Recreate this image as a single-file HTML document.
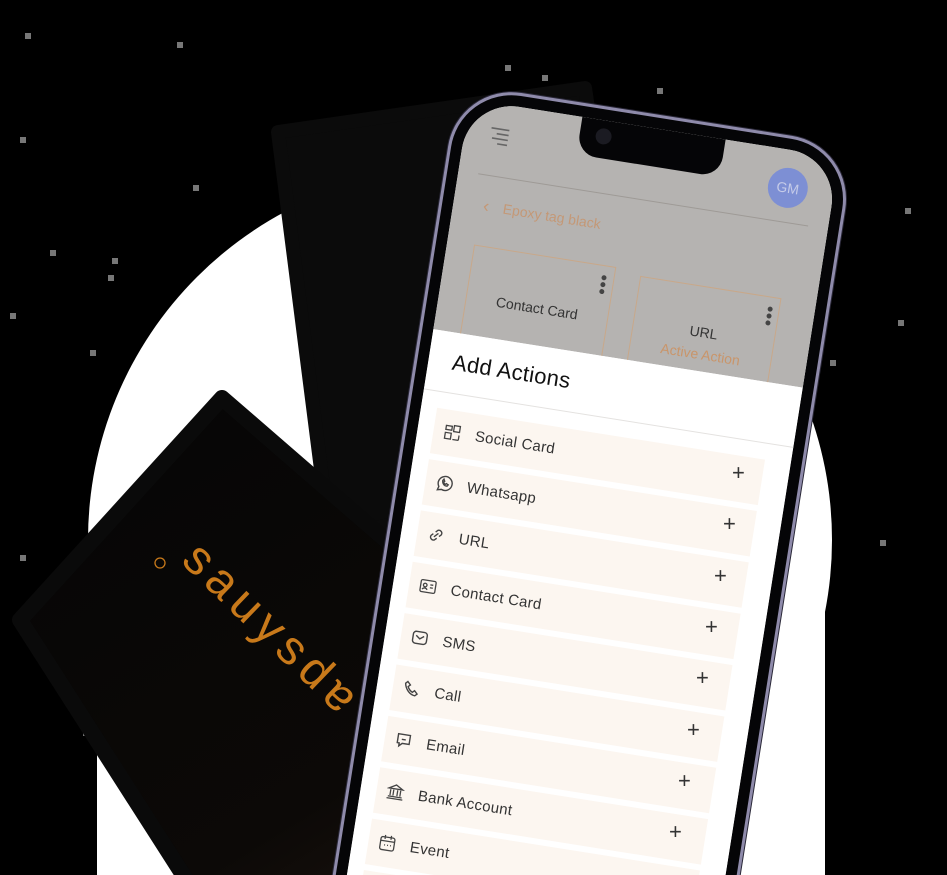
<!DOCTYPE html>
<html><head><meta charset="utf-8"><style>
*{margin:0;padding:0;box-sizing:border-box}
html{width:947px;height:875px;overflow:hidden;background:#000}
body{width:947px;height:875px;background:#000;overflow:hidden;position:relative;font-family:"Liberation Sans",sans-serif}
#wrap{position:absolute;left:0;top:0;width:947px;height:875px;overflow:hidden}
.abs{position:absolute}
.dot{position:absolute;width:6px;height:6px;background:#777}
.phone{position:absolute;left:475px;top:437px;width:0;height:0;transform:rotate(9deg);transform-origin:0 0}
.frame{position:absolute;left:-72px;top:-347px;width:402px;height:1000px;border-radius:64px;background:#050507;border:3px solid #8f8bab;box-shadow:0 0 0 1px #2a2838}
.screen{position:absolute;left:-58px;top:-333px;width:374px;height:980px;border-radius:50px;background:#fff;overflow:hidden}
.gray{position:absolute;left:0;top:0;width:100%;height:233px;background:#b5b3b1}
.row{position:absolute;left:16px;width:332px;height:46px;background:#fcf6f0}
.row span{position:absolute;left:42px;top:14px;font-size:15px;color:#333;letter-spacing:.3px}
.row svg{position:absolute;left:10px;top:13px}
.plus{position:absolute;font-size:22px;color:#333;font-weight:300;line-height:1}
</style></head><body><div id="wrap">
<div class="abs" style="left:88px;top:168px;width:744px;height:744px;border-radius:50%;background:#fff"></div>
<div class="abs" style="left:97px;top:540px;width:728px;height:335px;background:#fff"></div>
<div class="dot" style="left:25px;top:33px"></div><div class="dot" style="left:177px;top:42px"></div>
<div class="dot" style="left:505px;top:65px"></div><div class="dot" style="left:542px;top:75px"></div>
<div class="dot" style="left:657px;top:88px"></div><div class="dot" style="left:20px;top:137px"></div>
<div class="dot" style="left:193px;top:185px"></div><div class="dot" style="left:905px;top:208px"></div>
<div class="dot" style="left:50px;top:250px"></div><div class="dot" style="left:112px;top:258px"></div>
<div class="dot" style="left:108px;top:275px"></div><div class="dot" style="left:10px;top:313px"></div>
<div class="dot" style="left:898px;top:320px"></div><div class="dot" style="left:830px;top:360px"></div>
<div class="dot" style="left:90px;top:350px"></div><div class="dot" style="left:20px;top:555px"></div>
<div class="dot" style="left:83px;top:730px"></div><div class="dot" style="left:880px;top:540px"></div>
<svg class="abs" style="left:0;top:0" width="947" height="875">
<polygon points="278,132 585,88 640,460 330,540" fill="#0b0b0b" stroke="#0b0b0b" stroke-width="14" stroke-linejoin="round"/>
<defs><linearGradient id="g" x1="0" y1="0" x2="0.6" y2="1"><stop offset="0" stop-color="#050505"/><stop offset="0.6" stop-color="#0c0907"/><stop offset="1" stop-color="#2a1e15"/></linearGradient></defs>
<polygon points="20,620 222,398 720,830 340,1120" fill="url(#g)" stroke="#0a0a0a" stroke-width="16" stroke-linejoin="round"/>
<text x="0" y="0" transform="translate(180,562) rotate(44)" font-family="Liberation Sans" font-size="48" font-weight="300" fill="#c8791a" letter-spacing="7">sauysdɐ</text>
<circle cx="160" cy="563" r="5" fill="none" stroke="#c8791a" stroke-width="1.3"/>
</svg>
<div class="phone">
<div class="frame"></div>
<div class="screen">
 <div class="gray"></div>
 <div class="abs" style="left:114px;top:-10px;width:145px;height:48px;background:#050507;border-radius:0 0 20px 20px"></div>
 <div class="abs" style="left:130px;top:8px;width:16px;height:16px;border-radius:50%;background:#1b1b22"></div>
 <svg class="abs" style="left:24px;top:22px" width="22" height="20"><g stroke="#666" stroke-width="1.6"><line x1="2" y1="3" x2="20" y2="3"/><line x1="8" y1="8" x2="20" y2="8"/><line x1="4" y1="13" x2="20" y2="13"/><line x1="10" y1="18" x2="20" y2="18"/></g></svg>
 <div class="abs" style="left:20px;top:72px;width:334px;height:1px;background:#9e9a96"></div>
 <div class="abs" style="left:308px;top:18px;width:40px;height:40px;border-radius:50%;background:#7d8fd4;color:#c5cbe8;font-size:14px;text-align:center;line-height:40px">GM</div>
 <div class="abs" style="left:30px;top:93px;font-size:18px;color:#c49876">‹</div>
 <div class="abs" style="left:50px;top:95px;font-size:14px;color:#c49876">Epoxy tag black</div>
 <div class="abs" style="left:27px;top:143px;width:144px;height:130px;border:1px solid #c8a88a"></div>
 <div class="abs" style="left:27px;top:188px;width:144px;text-align:center;font-size:14px;color:#333">Contact Card</div>
 <div class="abs" style="left:158px;top:153px;width:5px;font-size:0"><div style="width:5px;height:5px;border-radius:50%;background:#444;margin-bottom:2px"></div><div style="width:5px;height:5px;border-radius:50%;background:#444;margin-bottom:2px"></div><div style="width:5px;height:5px;border-radius:50%;background:#444"></div></div>
 <div class="abs" style="left:196px;top:148px;width:143px;height:130px;border:1px solid #c8a88a"></div>
 <div class="abs" style="left:196px;top:186px;width:143px;text-align:center;font-size:14px;color:#333">URL</div>
 <div class="abs" style="left:196px;top:208px;width:143px;text-align:center;font-size:14px;color:#c9956a">Active Action</div>
 <div class="abs" style="left:327px;top:158px;width:5px;font-size:0"><div style="width:5px;height:5px;border-radius:50%;background:#444;margin-bottom:2px"></div><div style="width:5px;height:5px;border-radius:50%;background:#444;margin-bottom:2px"></div><div style="width:5px;height:5px;border-radius:50%;background:#444"></div></div>
 <div class="abs" style="left:0;top:233px;width:100%;height:800px;background:#fff"></div>
 <div class="abs" style="left:24px;top:250px;font-size:22px;font-weight:500;color:#111;letter-spacing:.3px">Add Actions</div>
 <div class="abs" style="left:0;top:293px;width:100%;height:1px;background:#e4e2e0"></div>

 <div class="row" style="top:310px"><svg width="18" height="18"><g fill="none" stroke="#444" stroke-width="1.3"><path d="M2 7V3h6v4H2z"/><path d="M10 2h6v6h-6z"/><path d="M2 10h6v6H2z"/><path d="M10 16h5a1 1 0 0 0 1-1v-4"/></g></svg><span>Social Card</span></div>
 <div class="row" style="top:362px"><svg width="18" height="18"><g fill="none" stroke="#444" stroke-width="1.4"><path d="M3 16l1-3.5A7 7 0 1 1 7 15z"/><path d="M7 6c0 3 2 5 5 5l1-1.5-2-1-1 1c-1-.5-1.5-1-2-2l1-1-1-2z"/></g></svg><span>Whatsapp</span></div>
 <div class="row" style="top:414px"><svg width="18" height="18"><g fill="none" stroke="#444" stroke-width="1.4"><path d="M8 6l2-2a3 3 0 0 1 4 4l-2 2"/><path d="M10 12l-2 2a3 3 0 0 1-4-4l2-2"/><path d="M7 11l4-4"/></g></svg><span>URL</span></div>
 <div class="row" style="top:466px"><svg width="18" height="18"><g fill="none" stroke="#444" stroke-width="1.3"><rect x="1.5" y="3" width="15" height="12" rx="1.5"/><circle cx="6" cy="8" r="1.8"/><path d="M3.5 12.5c1-2 4-2 5 0M11 7h3M11 10h3"/></g></svg><span>Contact Card</span></div>
 <div class="row" style="top:518px"><svg width="18" height="18"><g fill="none" stroke="#444" stroke-width="1.4"><rect x="2" y="3" width="14" height="12" rx="3"/><path d="M5 7l4 3 4-3"/></g></svg><span>SMS</span></div>
 <div class="row" style="top:570px"><svg width="18" height="18"><g fill="none" stroke="#444" stroke-width="1.4"><path d="M4 2l3 3-2 2c1 2 3 4 5 5l2-2 3 3-2 2C8 15 3 10 2 4z"/></g></svg><span>Call</span></div>
 <div class="row" style="top:622px"><svg width="18" height="18"><g fill="none" stroke="#444" stroke-width="1.4"><path d="M3 3h12v9H8l-3 3v-3H3z"/><path d="M7 8h4"/></g></svg><span>Email</span></div>
 <div class="row" style="top:674px"><svg width="18" height="18"><g fill="none" stroke="#444" stroke-width="1.3"><path d="M2 6l7-4 7 4z"/><path d="M4 7v6M7 7v6M11 7v6M14 7v6M2 14h14M1 16h16"/></g></svg><span>Bank Account</span></div>
 <div class="row" style="top:726px"><svg width="18" height="18"><g fill="none" stroke="#444" stroke-width="1.3"><rect x="2" y="3" width="14" height="13" rx="2"/><path d="M2 7h14M6 1v4M12 1v4M6 11h1M9 11h1M12 11h1"/></g></svg><span>Event</span></div>
 <div class="row" style="top:778px"></div>
</div>
</div>
<div class="plus" style="left:732px;top:462px">+</div>
<div class="plus" style="left:723px;top:513px">+</div>
<div class="plus" style="left:714px;top:565px">+</div>
<div class="plus" style="left:705px;top:616px">+</div>
<div class="plus" style="left:696px;top:667px">+</div>
<div class="plus" style="left:687px;top:719px">+</div>
<div class="plus" style="left:678px;top:770px">+</div>
<div class="plus" style="left:669px;top:821px">+</div>
</div></body></html>
